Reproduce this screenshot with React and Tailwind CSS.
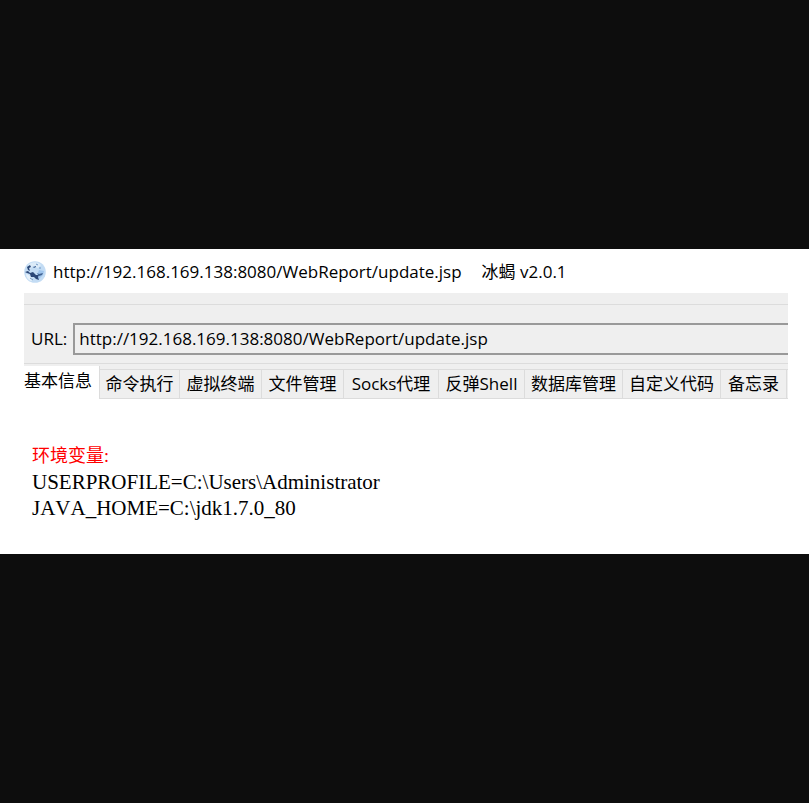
const TABS = [
  { label: "基本信息", width: "w-[76px]" },
  { label: "命令执行", width: "w-[80px]" },
  { label: "虚拟终端", width: "w-[82px]" },
  { label: "文件管理", width: "w-[82px]" },
  { label: "Socks代理", width: "w-[95px]" },
  { label: "反弹Shell", width: "w-[86px]" },
  { label: "数据库管理", width: "w-[98px]" },
  { label: "自定义代码", width: "w-[98px]" },
  { label: "备忘录", width: "w-[66px]" },
];

const ENV = ["USERPROFILE=C:\\Users\\Administrator", "JAVA_HOME=C:\\jdk1.7.0_80"];

function Logo() {
  return (
    <svg className="size-[22px] shrink-0" viewBox="0 0 22 22" aria-hidden="true">
      <circle cx="11" cy="11" r="10.8" fill="#c3dcf4" />
      <path d="M4 4c3-3 9-4 13 0l-3 3-5-2-3 3z" fill="#dcebf8" />
      <path d="M2 13c3 0 5 3 7 6l-2 1c-3-1-5-4-5-7z" fill="#e6f1fa" />
      <path d="M15 9l5 1-1 4-4 4-2-4z" fill="#9fc5ed" />
      <path d="M3 6l3-2 1 2-2 1 1 3-2-1zM1 11l3-1 2 2 3-1 3 3 3 0-1 2 1 3-3-1-2-2-3 0-1-3-3-1z" fill="#2b4777" />
      <path d="M13 12l2 1 4-1-1 2-3 1zM9 6l3-1 0 1-2 1zM15 7l2 0" fill="#416291" />
      <path d="M12 3l2 1M6 17l3 2M15 7h2" stroke="#7299c5" fill="none" />
    </svg>
  );
}

function Tab({ label, width, active }) {
  return (
    <button
      type="button"
      role="tab"
      aria-selected={active}
      className={`shrink-0 whitespace-nowrap border-r border-[#dcdcdc] leading-[26px] ${width} ${
        active
          ? "h-[33px] bg-white pb-[4px] text-left"
          : "h-[30px] border-y bg-[#efefef] text-center"
      }`}
    >
      {label}
    </button>
  );
}

export default function App() {
  return (
    <div className="flex min-h-screen flex-col justify-center bg-[#0d0d0d] font-['Open_Sans','Noto_Sans_CJK_SC',sans-serif] text-[17px] text-black">
      <main className="bg-white pr-[21px] pb-[33px] pl-6">
        <header className="flex h-11 items-center gap-[7px] pt-[2px]">
          <Logo />
          <h1 className="flex gap-5 whitespace-nowrap">
            <span>http://192.168.169.138:8080/WebReport/update.jsp</span>
            <span>冰蝎 v2.0.1</span>
          </h1>
        </header>

        <section className="bg-[#efefef]">
          <div className="h-3 border-b border-[#dcdcdc]" />
          <div className="flex h-[59px] items-center gap-[6px] border-b border-[#dcdcdc] pt-[9px] pl-[7px]">
            <label htmlFor="url">URL:</label>
            <input
              id="url"
              type="text"
              defaultValue="http://192.168.169.138:8080/WebReport/update.jsp"
              className="h-8 min-w-0 flex-1 border-2 border-r-0 border-[#999] bg-[#efefef] px-1 outline-none"
            />
          </div>
          <div role="tablist" className="mt-[2px] flex items-end overflow-hidden">
            {TABS.map((tab, i) => (
              <Tab key={tab.label} {...tab} active={i === 0} />
            ))}
            <div className="h-[30px] flex-1 border-y border-[#dcdcdc]" />
          </div>
        </section>

        <section className="pt-11 pl-2 font-['Liberation_Serif','Noto_Sans_CJK_SC',serif] text-[21px] leading-[26px] [font-kerning:none]">
          <h2 className="text-[18px] text-[#f00]">环境变量:</h2>
          {ENV.map((line) => (
            <p key={line}>{line}</p>
          ))}
        </section>
      </main>
    </div>
  );
}
